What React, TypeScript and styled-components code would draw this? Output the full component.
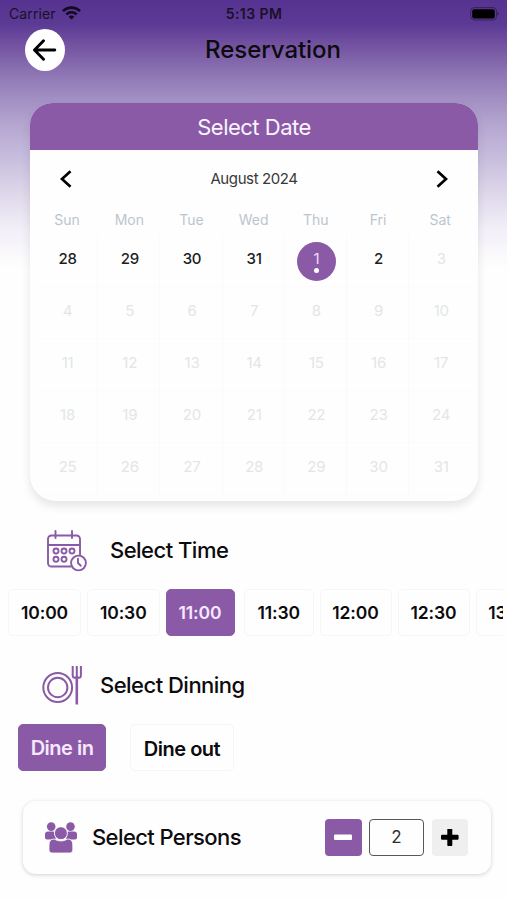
import React, { useState } from "react";
import styled, { createGlobalStyle, css } from "styled-components";

const PURPLE = "#8a5aa6";

const GlobalStyle = createGlobalStyle`
  * { box-sizing: border-box; }
  body { margin: 0; background: #fefefe; }
  button { font: inherit; border: 0; padding: 0; background: none; color: inherit; }
`;

const Screen = styled.div`
  width: 507px;
  height: 900px;
  overflow: hidden;
  display: flex;
  flex-direction: column;
  font-family: Inter, "Liberation Sans", sans-serif;
  color: #0c0b0e;
  background: linear-gradient(
    180deg,
    #563390 0px,
    #5b3a95 24px,
    #7352a1 45px,
    #8a71b1 70px,
    #a08cc1 96px,
    #b4a6d0 125px,
    #c5bbdc 155px,
    #dcd5e9 190px,
    #f1eef7 228px,
    #fefefe 268px
  );
`;

const StatusBar = styled.div`
  height: 28px;
  padding: 0 8px 0 9px;
  display: grid;
  grid-template-columns: 1fr auto 1fr;
  align-items: center;
  font-size: 14px;
  color: #1a1028;
`;

const Carrier = styled.div`
  display: flex;
  align-items: center;
  gap: 6px;
  margin-top: -2px;
  letter-spacing: 0.1px;
`;

const Clock = styled.div`
  margin-top: -2px;
  font-size: 14px;
  font-weight: 600;
  letter-spacing: 0.45px;
`;

const Battery = styled.svg`
  justify-self: end;
  margin-top: -1px;
`;

const Header = styled.header`
  height: 75px;
  padding: 1px 25px 0;
  display: grid;
  grid-template-columns: 40px 1fr 40px;
  align-items: start;
`;

const BackButton = styled.button`
  height: 42px;
  border-radius: 50%;
  background: #fff;
  display: grid;
  place-items: center;
`;

const Title = styled.h1`
  margin: 0;
  padding-left: 39px;
  line-height: 42px;
  text-align: center;
  font-size: 24px;
  font-weight: 500;
  letter-spacing: -0.05px;
`;

const CalendarCard = styled.section`
  flex: none;
  width: 448px;
  height: 398px;
  margin-left: 30px;
  border-radius: 22px 22px 26px 26px;
  overflow: hidden;
  background: #fefefe;
  box-shadow: 0 5px 10px rgba(0, 0, 0, 0.1);
`;

const CalendarTitle = styled.h2`
  margin: 0;
  height: 47px;
  line-height: 48px;
  background: ${PURPLE};
  color: #fbf4ff;
  text-align: center;
  font-size: 22px;
  font-weight: 400;
  letter-spacing: -0.5px;
`;

const MonthBar = styled.div`
  height: 57px;
  padding: 0 29px;
  display: flex;
  align-items: center;
  justify-content: space-between;
`;

const Month = styled.span`
  font-size: 15px;
  letter-spacing: -0.4px;
  color: #38383a;
`;

const WeekGrid = styled.div`
  display: grid;
  grid-template-columns: repeat(7, 62.2px);
  padding-left: 6px;
`;

const Weekday = styled.div`
  height: 28px;
  line-height: 25px;
  text-align: center;
  font-size: 14px;
  color: #bcc5cd;
`;

const DayCell = styled.div`
  height: 52px;
  padding-left: 2px;
  display: flex;
  justify-content: center;
  border-right: 1px solid #fafafb;
  border-bottom: 1px solid #fbfbfc;
  &:nth-child(7n) { border-right: 0; }
`;

const Day = styled.span<{ $state: "open" | "picked" | "off" }>`
  width: 39px;
  height: 39px;
  margin-top: 7px;
  padding-top: 7px;
  border-radius: 50%;
  line-height: 19px;
  text-align: center;
  font-size: 15px;
  letter-spacing: -0.2px;
  color: #e2e6e9;
  ${(p) => p.$state === "open" && css`color: #1d1d1f; font-weight: 500;`}
  ${(p) => p.$state === "picked" && css`background: ${PURPLE}; color: #f0dcfa;`}
`;

const PickedDot = styled.span`
  display: block;
  width: 5px;
  height: 5px;
  margin: 0 auto;
  border-radius: 50%;
  background: #fff;
`;

const SectionHead = styled.div<{ $left: number; $gap: number; $height: number }>`
  flex: none;
  height: ${(p) => p.$height}px;
  padding-top: 11px;
  padding-left: ${(p) => p.$left}px;
  display: flex;
  align-items: center;
  gap: ${(p) => p.$gap}px;
`;

const SectionTitle = styled.h3`
  margin: 0;
  padding-bottom: 1px;
  font-size: 22px;
  font-weight: 500;
  letter-spacing: -0.52px;
  white-space: nowrap;
`;

const TimeStrip = styled.div`
  flex: none;
  width: 503px;
  height: 47px;
  padding-left: 8px;
  overflow: hidden;
  display: flex;
  gap: 6px;
`;

const Option = styled.button<{ $width: number; $active: boolean }>`
  flex: none;
  width: ${(p) => p.$width}px;
  height: 46.5px;
  padding-top: 1px;
  border-radius: 5px;
  border: 1.5px solid #f6f6f7;
  background: #fefefe;
  font-size: 17.5px;
  font-weight: 600;
  letter-spacing: -0.1px;
  white-space: nowrap;
  ${(p) => p.$active && css`
    background: ${PURPLE};
    border-color: ${PURPLE};
    color: #f6e8ff;
  `}
`;

const TimeOption = styled(Option)`
  margin-right: ${(p) => (p.$active ? 3.5 : 0)}px;
`;

const DineOption = styled(Option)`
  padding-top: ${(p) => (p.$active ? 1 : 3)}px;
  font-size: 20px;
  letter-spacing: -0.5px;
`;

const DineRow = styled.div`
  flex: none;
  height: 77px;
  padding-left: 18px;
  display: flex;
  gap: 24px;
`;

const PersonsCard = styled.section`
  flex: none;
  width: 468px;
  height: 73px;
  margin-left: 23px;
  padding: 0 23px 0 22px;
  border-radius: 13px;
  background: #fefefe;
  box-shadow: 0 1px 4px rgba(0, 0, 0, 0.18);
  display: flex;
  align-items: center;
`;

const PersonsTitle = styled(SectionTitle)`
  margin-left: 15px;
  flex: 1;
  letter-spacing: -0.6px;
`;

const Stepper = styled.div`
  display: flex;
  gap: 7.5px;
`;

const StepButton = styled.button<{ $filled?: boolean }>`
  width: 36.5px;
  height: 36.5px;
  border-radius: 4px;
  display: grid;
  place-items: center;
  background: ${(p) => (p.$filled ? PURPLE : "#efefef")};
`;

const Count = styled.output`
  width: 55px;
  height: 36.5px;
  line-height: 35px;
  border: 1px solid #58585a;
  border-radius: 4px;
  text-align: center;
  font-size: 17px;
  color: #303032;
`;

const WifiIcon = () => (
  <svg width="19" height="14" viewBox="0 0 19 14" fill="none" stroke="#120a20" strokeWidth="2.6">
    <path d="M1 5.2C5.7.4 13.3.4 18 5.2" />
    <path d="M4.3 8.4c2.9-2.8 7.5-2.8 10.4 0" />
    <path d="M9.5 13.5 6.6 10.7c1.6-1.5 4.2-1.5 5.8 0Z" fill="#120a20" stroke="none" />
  </svg>
);

const CalendarIcon = () => (
  <svg width="40" height="42" viewBox="0 0 40 42" fill="none" stroke={PURPLE} strokeWidth="1.9" strokeLinecap="round">
    <path d="M24 36.5H4.5A3.5 3.5 0 0 1 1 33V9a3.5 3.5 0 0 1 3.5-3.5h25A3.5 3.5 0 0 1 33 9v16" />
    <path d="M1 15h32M8.5 1v7M25 1v7" />
    <circle cx="9" cy="21" r="2.5" /><circle cx="17" cy="21" r="2.5" /><circle cx="25" cy="21" r="2.5" />
    <circle cx="9" cy="29.3" r="2.5" /><circle cx="17" cy="29.3" r="2.5" />
    <circle cx="31.5" cy="33" r="7.4" fill="#fefefe" />
    <path d="M31 28.8V33l2.8 2.7" />
  </svg>
);

const PlateIcon = () => (
  <svg width="40" height="40" viewBox="0 0 40 40" fill="none" stroke={PURPLE} strokeWidth="2">
    <circle cx="15.7" cy="21.5" r="14.4" />
    <circle cx="15.7" cy="21.5" r="9.7" />
    <path d="M34.8 10v28.5" strokeWidth="2.6" />
    <path d="M30.7 0v9.200q0 2.600 2 2.600h4.200q2 0 2-2.600V0M34.8 0v11" />
  </svg>
);

const PeopleIcon = () => (
  <svg width="32" height="31" viewBox="0 0 32 31" fill={PURPLE}>
    <circle cx="6.2" cy="4.6" r="4.3" />
    <circle cx="25.5" cy="4.6" r="4.3" />
    <path d="M0 15.5v-3q0-3 3-3h5q2.5 0 2.5 2 0 6 .5 6H2q-2 0-2-2ZM32 15.5v-3q0-3-3-3h-5q-2.5 0-2.5 2 0 6-.5 6h9q2 0 2-2Z" />
    <path d="M4 28v-5q0-6 5.2-6 3 2 6.700 2t6.700-2q5.200 0 5.200 6v5q0 3-3 3H7q-3 0-3-3Z" stroke="#fefefe" strokeWidth=".8" />
    <circle cx="15.9" cy="11.2" r="6.5" stroke="#fefefe" strokeWidth="1" />
  </svg>
);

const weekdays = ["Sun", "Mon", "Tue", "Wed", "Thu", "Fri", "Sat"];
const days = [28, 29, 30, 31, ...Array.from({ length: 31 }, (_, i) => i + 1)];
const times = [
  { label: "10:00", width: 73 },
  { label: "10:30", width: 72.5 },
  { label: "11:00", width: 69 },
  { label: "11:30", width: 69.5 },
  { label: "12:00", width: 72 },
  { label: "12:30", width: 72 },
  { label: "13:00", width: 72 },
];

export default function App() {
  const [picked, setPicked] = useState(4);
  const [time, setTime] = useState("11:00");
  const [dineIn, setDineIn] = useState(true);
  const [persons, setPersons] = useState(2);

  return (
    <>
      <GlobalStyle />
      <Screen>
        <StatusBar>
          <Carrier>Carrier <WifiIcon /></Carrier>
          <Clock>5:13 PM</Clock>
          <Battery width="30" height="14" viewBox="0 0 30 14">
            <rect x="1.6" y=".6" width="26" height="12.4" rx="3.6" fill="none" stroke="#372258" />
            <rect x="3.2" y="2.2" width="22.6" height="9.2" rx="2" fill="#000" />
            <path d="M28.5 4.8q3 2 0 4Z" fill="#372258" />
          </Battery>
        </StatusBar>
        <Header>
          <BackButton aria-label="Back">
            <svg width="24" height="22" viewBox="0 0 24 22" fill="none" stroke="#000" strokeWidth="2.9" strokeLinecap="round" strokeLinejoin="round">
              <path d="M21.8 11H2M10.5 1.8 1.5 11l9 9.2" />
            </svg>
          </BackButton>
          <Title>Reservation</Title>
        </Header>
        <CalendarCard>
          <CalendarTitle>Select Date</CalendarTitle>
          <MonthBar>
            <svg width="14" height="18" viewBox="0 0 14 18" fill="none" stroke="#000" strokeWidth="2.7">
              <path d="M11.5 1.2 3 9l8.5 7.8" />
            </svg>
            <Month>August 2024</Month>
            <svg width="14" height="18" viewBox="0 0 14 18" fill="none" stroke="#000" strokeWidth="2.7">
              <path d="M2.5 1.2 11 9l-8.5 7.8" />
            </svg>
          </MonthBar>
          <WeekGrid>
            {weekdays.map((d) => <Weekday key={d}>{d}</Weekday>)}
          </WeekGrid>
          <WeekGrid>
            {days.map((d, i) => (
              <DayCell key={i} onClick={() => i < 6 && setPicked(i)}>
                <Day $state={i === picked ? "picked" : i < 6 ? "open" : "off"}>
                  {d}
                  {i === picked && <PickedDot />}
                </Day>
              </DayCell>
            ))}
          </WeekGrid>
        </CalendarCard>
        <SectionHead $left={47} $gap={23} $height={88}>
          <CalendarIcon />
          <SectionTitle>Select Time</SectionTitle>
        </SectionHead>
        <TimeStrip>
          {times.map((t) => (
            <TimeOption key={t.label} $width={t.width} $active={t.label === time} onClick={() => setTime(t.label)}>
              {t.label}
            </TimeOption>
          ))}
        </TimeStrip>
        <SectionHead $left={42} $gap={18} $height={88}>
          <PlateIcon />
          <SectionTitle>Select Dinning</SectionTitle>
        </SectionHead>
        <DineRow>
          <DineOption $width={88} $active={dineIn} onClick={() => setDineIn(true)}>Dine in</DineOption>
          <DineOption $width={104} $active={!dineIn} onClick={() => setDineIn(false)}>Dine out</DineOption>
        </DineRow>
        <PersonsCard>
          <PeopleIcon />
          <PersonsTitle>Select Persons</PersonsTitle>
          <Stepper>
            <StepButton $filled aria-label="Fewer" onClick={() => setPersons(Math.max(1, persons - 1))}>
              <svg width="18" height="18"><rect y="5.5" width="18" height="5.4" rx="1" fill="#fff" /></svg>
            </StepButton>
            <Count>{persons}</Count>
            <StepButton aria-label="More" onClick={() => setPersons(persons + 1)}>
              <svg width="18" height="18">
                <rect x="0" y="5.8" width="17.6" height="5" rx="1.2" />
                <rect x="6.3" y="-.5" width="5" height="17.6" rx="1.2" />
              </svg>
            </StepButton>
          </Stepper>
        </PersonsCard>
      </Screen>
    </>
  );
}
